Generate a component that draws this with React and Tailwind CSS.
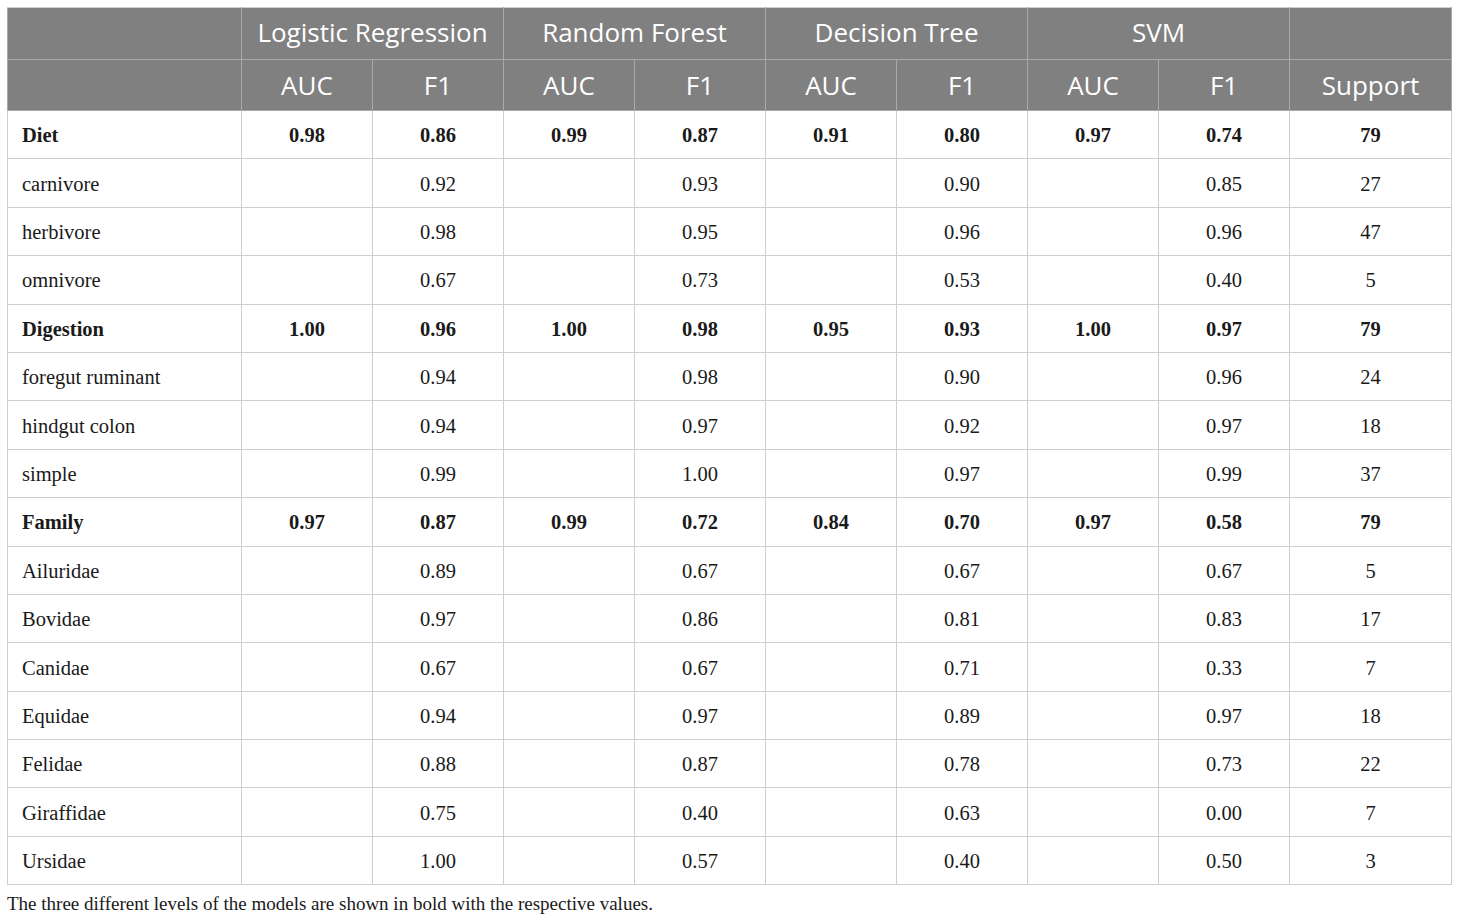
const groups = ['Logistic Regression', 'Random Forest', 'Decision Tree', 'SVM'];

const rows = [
  { label: 'Diet', bold: true, v: ['0.98', '0.86', '0.99', '0.87', '0.91', '0.80', '0.97', '0.74'], s: '79' },
  { label: 'carnivore', v: ['', '0.92', '', '0.93', '', '0.90', '', '0.85'], s: '27' },
  { label: 'herbivore', v: ['', '0.98', '', '0.95', '', '0.96', '', '0.96'], s: '47' },
  { label: 'omnivore', v: ['', '0.67', '', '0.73', '', '0.53', '', '0.40'], s: '5' },
  { label: 'Digestion', bold: true, v: ['1.00', '0.96', '1.00', '0.98', '0.95', '0.93', '1.00', '0.97'], s: '79' },
  { label: 'foregut ruminant', v: ['', '0.94', '', '0.98', '', '0.90', '', '0.96'], s: '24' },
  { label: 'hindgut colon', v: ['', '0.94', '', '0.97', '', '0.92', '', '0.97'], s: '18' },
  { label: 'simple', v: ['', '0.99', '', '1.00', '', '0.97', '', '0.99'], s: '37' },
  { label: 'Family', bold: true, v: ['0.97', '0.87', '0.99', '0.72', '0.84', '0.70', '0.97', '0.58'], s: '79' },
  { label: 'Ailuridae', v: ['', '0.89', '', '0.67', '', '0.67', '', '0.67'], s: '5' },
  { label: 'Bovidae', v: ['', '0.97', '', '0.86', '', '0.81', '', '0.83'], s: '17' },
  { label: 'Canidae', v: ['', '0.67', '', '0.67', '', '0.71', '', '0.33'], s: '7' },
  { label: 'Equidae', v: ['', '0.94', '', '0.97', '', '0.89', '', '0.97'], s: '18' },
  { label: 'Felidae', v: ['', '0.88', '', '0.87', '', '0.78', '', '0.73'], s: '22' },
  { label: 'Giraffidae', v: ['', '0.75', '', '0.40', '', '0.63', '', '0.00'], s: '7' },
  { label: 'Ursidae', v: ['', '1.00', '', '0.57', '', '0.40', '', '0.50'], s: '3' },
];

export default function App() {
  return (
    <div className="w-[1460px] h-[921px] bg-white pt-[7px] pl-[7px]">
      <table className="border-collapse table-fixed w-[1445px] text-[#1a1a1a]">
        <colgroup>
          <col className="w-[234px]" />
          {Array.from({ length: 8 }).map((_, i) => (
            <col key={i} className="w-[131px]" />
          ))}
          <col className="w-[162px]" />
        </colgroup>
        <thead className="bg-[#808080] text-white font-['Open_Sans',sans-serif] text-[26px]">
          <tr className="h-[52px]">
            <th className="border border-[#a8a8a8] border-t-[#d0d0d0]" />
            {groups.map((g) => (
              <th key={g} colSpan={2} className="border border-[#a8a8a8] border-t-[#d0d0d0] font-normal text-center pb-[2px]">
                {g}
              </th>
            ))}
            <th className="border border-[#a8a8a8] border-t-[#d0d0d0]" />
          </tr>
          <tr className="h-[51px]">
            <th className="border border-[#a8a8a8]" />
            {groups.map((g) => (
              <>
                <th key={g + 'a'} className="border border-[#a8a8a8] font-normal text-center">AUC</th>
                <th key={g + 'f'} className="border border-[#a8a8a8] font-normal text-center">F1</th>
              </>
            ))}
            <th className="border border-[#a8a8a8] font-normal text-center">Support</th>
          </tr>
        </thead>
        <tbody className="font-['Liberation_Serif',serif] text-[20.5px]">
          {rows.map((r) => (
            <tr key={r.label} className={`h-[48.4px] ${r.bold ? 'font-bold' : ''}`}>
              <td className="border border-[#cfcfcf] pl-[14px] pt-[2px]">{r.label}</td>
              {r.v.map((v, i) => (
                <td key={i} className="border border-[#cfcfcf] text-center pt-[2px]">{v}</td>
              ))}
              <td className="border border-[#cfcfcf] text-center pt-[2px]">{r.s}</td>
            </tr>
          ))}
        </tbody>
      </table>
      <p className="font-['Liberation_Serif',serif] text-[19px] text-[#1a1a1a] mt-[5px]">
        The three different levels of the models are shown in bold with the respective values.
      </p>
    </div>
  );
}
